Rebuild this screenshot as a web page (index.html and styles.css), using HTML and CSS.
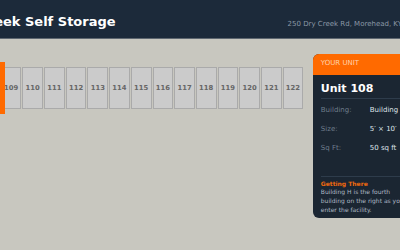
FILE: index.html
```html
<!DOCTYPE html>
<html lang="en">
<head>
    <title>Dry Creek Self Storage</title>
    <link rel="stylesheet" href="styles.css">
</head>
<body>
<div class="page">
    <header class="topbar">
        <h1 class="brand">Dry Creek Self Storage</h1>
        <span class="address">250 Dry Creek Rd, Morehead, KY</span>
    </header>
    <main class="site">
        <div class="units">
            <div class="unit selected">108</div>
            <div class="unit">109</div>
            <div class="unit">110</div>
            <div class="unit">111</div>
            <div class="unit">112</div>
            <div class="unit">113</div>
            <div class="unit">114</div>
            <div class="unit">115</div>
            <div class="unit">116</div>
            <div class="unit">117</div>
            <div class="unit">118</div>
            <div class="unit">119</div>
            <div class="unit">120</div>
            <div class="unit">121</div>
            <div class="unit">122</div>
        </div>
        <aside class="unit-card">
            <div class="card-head">YOUR UNIT</div>
            <div class="card-body">
                <h2 class="unit-name">Unit 108</h2>
                <div class="details">
                    <div class="row"><span class="label">Building:</span><span class="value">Building H</span></div>
                    <div class="row"><span class="label">Size:</span><span class="value">5′ × 10′</span></div>
                    <div class="row"><span class="label">Sq Ft:</span><span class="value">50 sq ft</span></div>
                </div>
                <div class="directions">
                    <h3>Getting There</h3>
                    <p>Building H is the fourth building on the right as you enter the facility.</p>
                </div>
            </div>
        </aside>
    </main>
</div>
</body>
</html>
```

FILE: styles.css
```css
html, body{
    margin: 0;
    overflow: hidden;
}
body{
    background-color: #c8c7bf;
    font-family: "DejaVu Sans", sans-serif;
}
.page{
    width: 468px;
    margin-left: -54px;
}
.topbar{
    display: flex;
    justify-content: space-between;
    align-items: baseline;
    box-sizing: border-box;
    height: 39px;
    padding: 14px 12px 0 2px;
    background-color: #1c2a3a;
    border-bottom: 1px solid #5e6770;
}
.brand{
    margin: 0;
    font-size: 13px;
    line-height: 15px;
    color: white;
    white-space: nowrap;
}
.address{
    font-size: 7px;
    color: #8b98a6;
    white-space: nowrap;
}
.site{
    display: flex;
    align-items: flex-start;
    padding: 15px 0 0 33px;
}
.units{
    display: flex;
    gap: 1px;
    margin-top: 13px;
    flex: none;
}
.unit{
    display: flex;
    align-items: center;
    justify-content: center;
    box-sizing: border-box;
    width: 20.7px;
    height: 42px;
    background-color: #cbcbcb;
    border: 1px solid #aaaaaa;
    font-size: 6.8px;
    font-weight: bold;
    color: #666666;
}
.unit.selected{
    position: relative;
    z-index: 1;
    background-color: #ff6a00;
    border-color: #ff6a00;
    color: white;
    box-shadow: 0 0 0 5px #ff6a00;
}
.unit-card{
    flex: none;
    width: 104px;
    margin-left: 9.5px;
    border-radius: 6px;
    overflow: hidden;
    background-color: #1b2632;
}
.card-head{
    padding: 5px 8px 7px 8px;
    background-color: #ff6a00;
    color: #ffd2ad;
    font-size: 7px;
    line-height: 9px;
}
.card-body{
    padding: 7px 0 4px 8px;
}
.unit-name{
    margin: 0;
    padding-bottom: 2px;
    border-bottom: 1px solid #2e3c4b;
    font-size: 11px;
    line-height: 14px;
    color: white;
}
.details{
    padding-top: 2px;
}
.row{
    display: flex;
    height: 19px;
    line-height: 19px;
    font-size: 7px;
    white-space: nowrap;
}
.label{
    width: 49px;
    flex: none;
    color: #6f7d8c;
}
.value{
    color: #dfe4ea;
}
.directions{
    margin-top: 18px;
    padding-top: 2px;
    border-top: 1px solid #2e3c4b;
    padding-right: 8px;
}
.directions h3{
    margin: 0;
    font-size: 6px;
    line-height: 9px;
    color: #f06a0e;
}
.directions p{
    margin: 0;
    font-size: 6px;
    line-height: 8.8px;
    color: #aeb8c3;
}
```
